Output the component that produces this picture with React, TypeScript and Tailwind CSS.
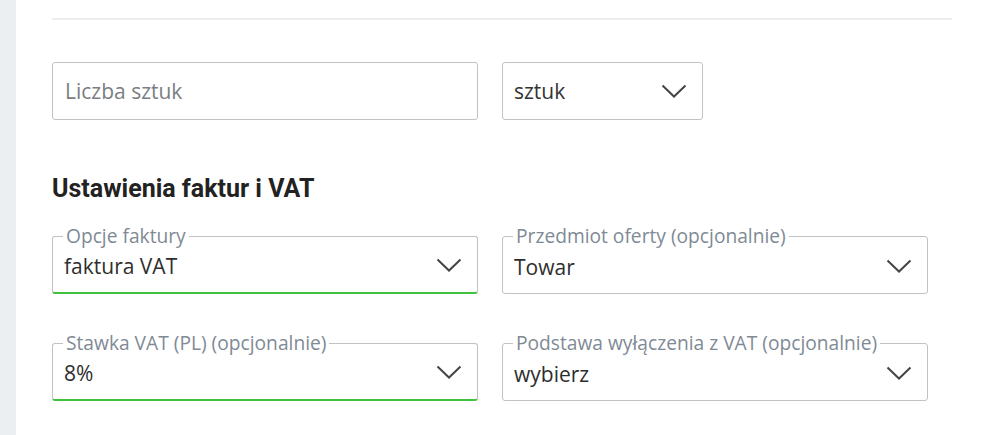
import React from "react";

const Chevron = () => (
  <svg width="26" height="14" viewBox="0 0 26 14" fill="none" className="shrink-0">
    <path d="M1.5 1.5 L13 12.5 L24.5 1.5" stroke="#454545" strokeWidth="2" />
  </svg>
);

type FieldProps = { label: string; value: string; active?: boolean };

const Field = ({ label, value, active }: FieldProps) => (
  <div
    className={
      active
        ? "relative h-[58px] w-[426px] rounded-[3px] border border-[#c2c2c2] border-b-2 border-b-[#3fc33f] flex items-center justify-between pl-[11px] pr-[15px]"
        : "relative h-[58px] w-[426px] rounded-[3px] border border-[#c2c2c2] flex items-center justify-between pl-[11px] pr-[15px]"
    }
  >
    <span className="absolute left-[10px] top-[-12px] bg-white px-[3px] text-[19.2px] leading-[22px] text-[#808a95]">
      {label}
    </span>
    <span className="text-[21px] leading-[28px] text-[#2e2e2e] pt-[3px]">{value}</span>
    <span className="pt-[1px] flex">
      <Chevron />
    </span>
  </div>
);

export default function App() {
  return (
    <div className="flex min-h-[435px] bg-white font-['Open_Sans',sans-serif]">
      <div className="w-4 shrink-0 bg-[#ebeff2]" />
      <div className="pl-9 pt-[18px]">
        <div className="h-[2px] w-[900px] bg-[#ededed]" />
        <div className="mt-[42px] flex gap-6">
          <div className="h-[58px] w-[426px] rounded-[3px] border border-[#c2c2c2] flex items-center px-3">
            <input
              className="w-full bg-transparent outline-none text-[21px] leading-[28px] text-[#2e2e2e] placeholder:text-[#7b7e82]"
              placeholder="Liczba sztuk"
            />
          </div>
          <div className="h-[58px] w-[201px] rounded-[3px] border border-[#c2c2c2] flex items-center justify-between pl-[11px] pr-[15px]">
            <span className="text-[21px] leading-[28px] text-[#333]">sztuk</span>
            <Chevron />
          </div>
        </div>
        <h2 className="mt-[55px] font-['Roboto',sans-serif] font-bold text-[25px] leading-[28px] text-[#222]">
          Ustawienia faktur i VAT
        </h2>
        <div className="mt-[33px] grid grid-cols-[426px_426px] gap-x-6 gap-y-[49px]">
          <Field label="Opcje faktury" value="faktura VAT" active />
          <Field label="Przedmiot oferty (opcjonalnie)" value="Towar" />
          <Field label="Stawka VAT (PL) (opcjonalnie)" value="8%" active />
          <Field label="Podstawa wyłączenia z VAT (opcjonalnie)" value="wybierz" />
        </div>
      </div>
    </div>
  );
}
